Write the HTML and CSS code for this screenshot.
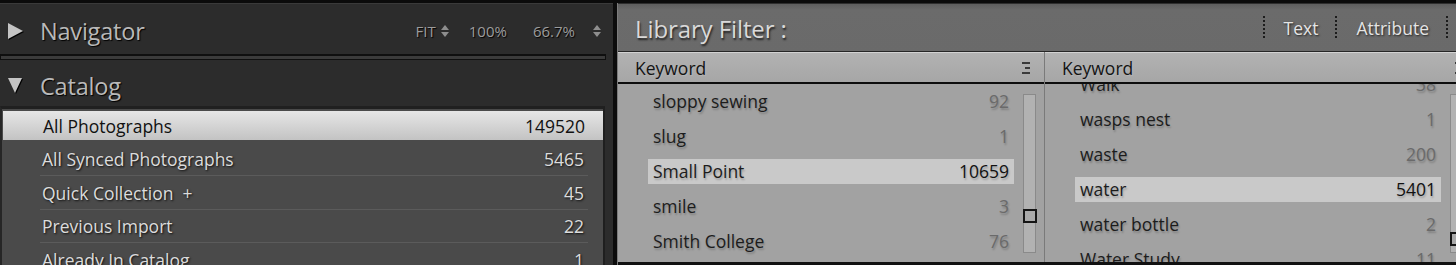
FILE: index.html
```html
<!DOCTYPE html>
<html>
<head>
<meta charset="utf-8">
<link rel="stylesheet" href="styles.css">
</head>
<body>
<div class="app">
  <aside class="left">
    <div class="panel-head nav-head">
      <span class="tri tri-right"></span>
      <span class="panel-title">Navigator</span>
      <div class="zoom-opts">
        <span class="zopt">FIT<span class="updown"></span></span>
        <span class="zopt">100%</span>
        <span class="zopt">66.7%</span>
        <span class="updown big"></span>
      </div>
    </div>
    <div class="nav-strip"></div>
    <div class="panel-head cat-head">
      <span class="tri tri-down"></span>
      <span class="panel-title">Catalog</span>
    </div>
    <div class="cat-list">
      <div class="cat-row selected"><span>All Photographs</span><span>149520</span></div>
      <div class="cat-row"><span>All Synced Photographs</span><span>5465</span></div>
      <div class="cat-row"><span>Quick Collection&nbsp; +</span><span>45</span></div>
      <div class="cat-row"><span>Previous Import</span><span>22</span></div>
      <div class="cat-row"><span>Already In Catalog</span><span>1</span></div>
    </div>
  </aside>
  <div class="divider"></div>
  <main class="right">
    <div class="filter-head">
      <span class="filter-title">Library Filter :</span>
      <div class="filter-tabs">
        <span class="dots"></span>
        <span class="ftab">Text</span>
        <span class="dots"></span>
        <span class="ftab">Attribute</span>
        <span class="dots"></span>
      </div>
    </div>
    <div class="columns">
      <section class="col">
        <div class="col-head"><span>Keyword</span><span class="menu-ico"><i></i><i class="short"></i><i></i></span></div>
        <div class="col-body">
          <div class="kw-list">
            <div class="kw-row"><span>sloppy sewing</span><span class="n">92</span></div>
            <div class="kw-row"><span>slug</span><span class="n">1</span></div>
            <div class="kw-row sel"><span>Small Point</span><span class="n">10659</span></div>
            <div class="kw-row"><span>smile</span><span class="n">3</span></div>
            <div class="kw-row"><span>Smith College</span><span class="n">76</span></div>
          </div>
          <div class="track"><span class="thumb t1"></span></div>
        </div>
      </section>
      <section class="col col2">
        <div class="col-head"><span>Keyword</span><span class="menu-ico"><i></i><i class="short"></i><i></i></span></div>
        <div class="col-body">
          <div class="kw-list shifted">
            <div class="kw-row"><span>Walk</span><span class="n">38</span></div>
            <div class="kw-row"><span>wasps nest</span><span class="n">1</span></div>
            <div class="kw-row"><span>waste</span><span class="n">200</span></div>
            <div class="kw-row sel"><span>water</span><span class="n">5401</span></div>
            <div class="kw-row"><span>water bottle</span><span class="n">2</span></div>
            <div class="kw-row"><span>Water Study</span><span class="n">11</span></div>
          </div>
          <div class="track"><span class="thumb t2"></span></div>
        </div>
      </section>
    </div>
  </main>
</div>
</body>
</html>
```

FILE: styles.css
```css
* { box-sizing: border-box; }
html, body { margin: 0; padding: 0; }
body {
  width: 1456px;
  height: 265px;
  overflow: hidden;
  background: #0e0e0e;
  font-family: "Open Sans", "Noto Sans", sans-serif;
}
.app {
  display: flex;
  height: 265px;
  border-top: 3px solid #0b0b0b;
}

/* ---------- left panel ---------- */
.left {
  width: 613px;
  flex: none;
  background: #2c2c2c;
  border-top: 1px solid #3a3a3a;
  display: flex;
  flex-direction: column;
}
.panel-head {
  display: flex;
  align-items: center;
  padding-left: 8px;
}
.nav-head { height: 50px; padding-top: 4px; }
.cat-head { height: 46px; padding-top: 5px; }
.panel-title {
  color: #b9b9b9;
  font-size: 23.5px;
  margin-left: 17px;
  text-shadow: 1px 1px 1px #000;
  letter-spacing: -0.2px;
}
.tri {
  width: 0;
  height: 0;
  display: inline-block;
  filter: drop-shadow(1px 1px 0 #000);
}
.tri-right {
  border-top: 8px solid transparent;
  border-bottom: 8px solid transparent;
  border-left: 15px solid #c4c4c4;
}
.tri-down {
  border-left: 7px solid transparent;
  border-right: 7px solid transparent;
  border-top: 15px solid #c4c4c4;
  margin-right: 1px;
}
.zoom-opts {
  margin-left: auto;
  margin-right: 12px;
  display: flex;
  align-items: center;
  color: #9c9c9c;
  font-size: 15px;
  text-shadow: 1px 1px 1px #000;
}
.zopt { display: flex; align-items: center; }
.zopt:nth-child(2) { margin-left: 20px; }
.zopt:nth-child(3) { margin-left: 26px; }
.updown {
  display: inline-flex;
  flex-direction: column;
  gap: 2px;
  margin-left: 5px;
}
.updown::before, .updown::after {
  content: "";
  width: 0;
  height: 0;
  border-left: 4px solid transparent;
  border-right: 4px solid transparent;
}
.updown::before { border-bottom: 5px solid #8e8e8e; }
.updown::after { border-top: 5px solid #8e8e8e; }
.updown.big { margin-left: 18px; }

.nav-strip {
  height: 6px;
  margin-right: 7px;
  background: #3b3b3b;
  border: 1px solid #0f0f0f;
  border-top-width: 2px;
}

.cat-list {
  flex: 1;
  margin-right: 8px;
  background: #4a4a4a;
  border-top: 3px solid #202020;
  border-left: 2px solid #262626;
  border-right: 2px solid #1f1f1f;
  padding-top: 2px;
  overflow: hidden;
}
.cat-row {
  height: 33.5px;
  display: flex;
  align-items: center;
  justify-content: space-between;
  padding: 0 19px 0 40px;
  color: #dcdcdc;
  font-size: 17.5px;
  text-shadow: 1px 1px 2px #111;
  position: relative;
}
.cat-row::after {
  content: "";
  position: absolute;
  left: 38px;
  right: 15px;
  bottom: 0;
  height: 1px;
  background: #5b5b5b;
}
.cat-row.selected {
  height: 29px;
  margin: 0 0 2.5px 1px;
  background: linear-gradient(#e6e6e6, #c3c3c3);
  color: #111;
  text-shadow: none;
  padding-right: 18px;
}
.cat-row.selected::after { display: none; }

.divider {
  width: 4px;
  flex: none;
  background: #0c0c0c;
}

/* ---------- right panel ---------- */
.right {
  flex: 1;
  display: flex;
  flex-direction: column;
  border-left: 1px solid #7c7c7c;
  min-width: 0;
}
.filter-head {
  height: 49px;
  background: linear-gradient(#5e5e5e 0, #6b6b6b 6px, #6a6a6a);
  border-top: 1px solid #2e2e2e;
  border-bottom: 1px solid #262626;
  display: flex;
  align-items: center;
  padding-left: 17px;
}
.filter-title {
  color: #d9d9d9;
  font-size: 24px;
  text-shadow: 1px 2px 2px #222;
  letter-spacing: -0.1px;
  padding-top: 2px;
}
.filter-tabs {
  margin-left: auto;
  display: flex;
  align-items: center;
  margin-right: 8px;
}
.dots {
  width: 2px;
  height: 24px;
  background: repeating-linear-gradient(#1c1c1c 0 2px, transparent 2px 4px);
}
.ftab {
  color: #e4e4e4;
  font-size: 17.5px;
  margin: 0 17px 0 19px;
  text-shadow: 1px 1px 2px #222;
}
.columns {
  flex: 1;
  display: flex;
  border-bottom: 3px solid #111;
  min-height: 0;
}
.col {
  width: 427px;
  flex: none;
  display: flex;
  flex-direction: column;
  border-right: 1px solid #7a7a7a;
}
.col2 { flex: 1; border-right: none; }
.col-head {
  height: 32px;
  background: linear-gradient(#b2b2b2, #a6a6a6);
  border-top: 1px solid #d2d2d2;
  border-bottom: 2px solid #0d0d0d;
  display: flex;
  align-items: center;
  justify-content: space-between;
  padding: 0 14px 0 17px;
  color: #141414;
  font-size: 17.5px;
  text-shadow: 1px 1px 1px rgba(255,255,255,0.15);
}
.col2 .col-head { padding-right: 0; }
.menu-ico {
  display: flex;
  flex-direction: column;
  align-items: flex-end;
  gap: 3px;
}
.menu-ico i {
  display: block;
  width: 8px;
  height: 2px;
  background: #3a3a3a;
}
.menu-ico i.short { width: 5px; }
.col-body {
  flex: 1;
  display: flex;
  background: #a2a2a2;
  padding-left: 30px;
  overflow: hidden;
  min-height: 0;
}
.kw-list {
  width: 366px;
  flex: none;
}
.kw-list.shifted { margin-top: -17px; }
.kw-row {
  height: 35px;
  display: flex;
  align-items: center;
  justify-content: space-between;
  padding: 0 5px 1px;
  color: #1c1c1c;
  font-size: 17.5px;
  text-shadow: 1px 2px 2px rgba(0,0,0,0.22);
}
.kw-row .n { color: #6a6a6a; }
.kw-row.sel {
  background: linear-gradient(#c9c9c9, #c9c9c9) 0 5px / 100% 25px no-repeat;
  border-radius: 4px;
}
.kw-row.sel .n { color: #111; }
.track {
  position: relative;
  width: 13px;
  flex: none;
  margin: 10px 0 9px 9px;
  background: #b2b2b2;
  border: 1px solid #8a8a8a;
}
.thumb {
  position: absolute;
  left: -1px;
  width: 14px;
  height: 14px;
  border: 2px solid #151515;
  background: #a9a9a9;
}
.t1 { top: 114px; }
.t2 { top: 137px; }
```
